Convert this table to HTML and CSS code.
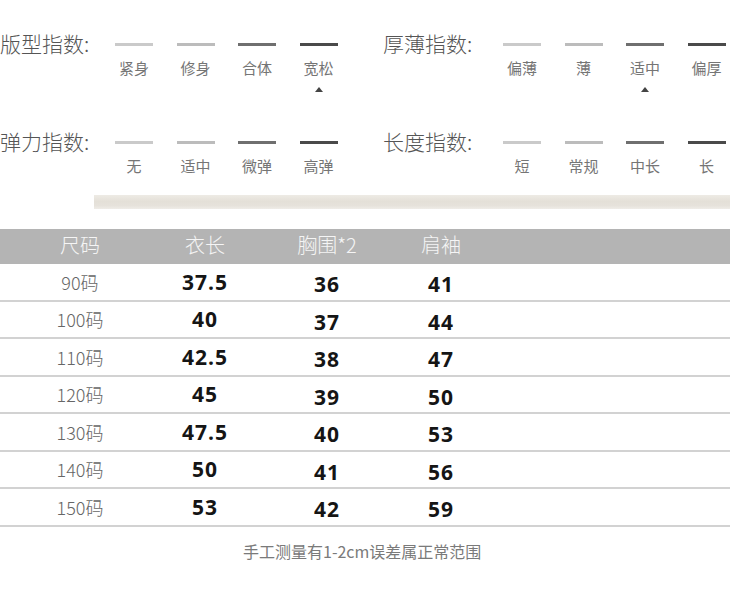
FILE: index.html
```html
<!DOCTYPE html>
<html lang="zh-CN">
<head>
<meta charset="utf-8">
<title>尺码表</title>
<link rel="stylesheet" href="styles.css">
</head>
<body>
<section class="indexes">
  <div class="index-row">
    <div class="index-group">
      <div class="index-label">版型指数:</div>
      <ul class="scale">
        <li class="step s1"><span class="bar"></span><span class="step-text">紧身</span></li>
        <li class="step s2"><span class="bar"></span><span class="step-text">修身</span></li>
        <li class="step s3"><span class="bar"></span><span class="step-text">合体</span></li>
        <li class="step s4 active"><span class="bar"></span><span class="step-text">宽松</span></li>
      </ul>
    </div>
    <div class="index-group wide">
      <div class="index-label">厚薄指数:</div>
      <ul class="scale">
        <li class="step s1"><span class="bar"></span><span class="step-text">偏薄</span></li>
        <li class="step s2"><span class="bar"></span><span class="step-text">薄</span></li>
        <li class="step s3 active"><span class="bar"></span><span class="step-text">适中</span></li>
        <li class="step s4"><span class="bar"></span><span class="step-text">偏厚</span></li>
      </ul>
    </div>
  </div>
  <div class="index-row">
    <div class="index-group">
      <div class="index-label">弹力指数:</div>
      <ul class="scale">
        <li class="step s1"><span class="bar"></span><span class="step-text">无</span></li>
        <li class="step s2"><span class="bar"></span><span class="step-text">适中</span></li>
        <li class="step s3"><span class="bar"></span><span class="step-text">微弹</span></li>
        <li class="step s4"><span class="bar"></span><span class="step-text">高弹</span></li>
      </ul>
    </div>
    <div class="index-group wide">
      <div class="index-label">长度指数:</div>
      <ul class="scale">
        <li class="step s1"><span class="bar"></span><span class="step-text">短</span></li>
        <li class="step s2"><span class="bar"></span><span class="step-text">常规</span></li>
        <li class="step s3"><span class="bar"></span><span class="step-text">中长</span></li>
        <li class="step s4"><span class="bar"></span><span class="step-text">长</span></li>
      </ul>
    </div>
  </div>
</section>

<div class="divider"></div>

<section class="size-table">
  <div class="tr thead">
    <div class="td">尺码</div>
    <div class="td">衣长</div>
    <div class="td">胸围*2</div>
    <div class="td">肩袖</div>
    <div class="td"></div>
  </div>
  <div class="tr"><div class="td size">90码</div><div class="td val">37.5</div><div class="td val low">36</div><div class="td val low">41</div><div class="td"></div></div>
  <div class="tr"><div class="td size">100码</div><div class="td val">40</div><div class="td val low">37</div><div class="td val low">44</div><div class="td"></div></div>
  <div class="tr"><div class="td size">110码</div><div class="td val">42.5</div><div class="td val low">38</div><div class="td val low">47</div><div class="td"></div></div>
  <div class="tr"><div class="td size">120码</div><div class="td val">45</div><div class="td val low">39</div><div class="td val low">50</div><div class="td"></div></div>
  <div class="tr"><div class="td size">130码</div><div class="td val">47.5</div><div class="td val low">40</div><div class="td val low">53</div><div class="td"></div></div>
  <div class="tr"><div class="td size">140码</div><div class="td val">50</div><div class="td val low">41</div><div class="td val low">56</div><div class="td"></div></div>
  <div class="tr"><div class="td size">150码</div><div class="td val">53</div><div class="td val low">42</div><div class="td val low">59</div><div class="td"></div></div>
</section>

<p class="note">手工测量有1-2cm误差属正常范围</p>
</body>
</html>
```

FILE: styles.css
```css
html, body {
  margin: 0;
  padding: 0;
}

body {
  width: 730px;
  height: 598px;
  overflow: hidden;
  background: #ffffff;
  font-family: "Noto Sans CJK SC", "Noto Sans", sans-serif;
}

.indexes {
  padding-top: 31px;
  display: flex;
  flex-direction: column;
  gap: 51px;
}

.index-row {
  display: grid;
  grid-template-columns: 383px 1fr;
}

.index-group {
  display: flex;
  align-items: flex-start;
}

.index-label {
  flex: none;
  width: 115px;
  font-size: 21px;
  line-height: 24px;
  font-weight: 300;
  color: #555555;
  white-space: nowrap;
}

.index-group.wide .index-label {
  width: 120px;
}

.scale {
  display: flex;
  gap: 23.5px;
  list-style: none;
  margin: 12px 0 0;
  padding: 0;
}

.step {
  position: relative;
  width: 38px;
  display: flex;
  flex-direction: column;
  align-items: center;
}

.bar {
  display: block;
  width: 38px;
  height: 3px;
}

.s1 .bar { background: #cacaca; }
.s2 .bar { background: #bcbcbc; }
.s3 .bar { background: #6f6f6f; }
.s4 .bar { background: #4a4a4a; }

.step-text {
  margin-top: 12px;
  font-size: 15px;
  line-height: 20px;
  color: #757575;
  white-space: nowrap;
}

.step.active::after {
  content: "";
  position: absolute;
  top: 44px;
  left: 50%;
  margin-left: -4px;
  border-left: 4px solid transparent;
  border-right: 4px solid transparent;
  border-bottom: 5px solid #444444;
}

.divider {
  margin: 19px 0 0 94px;
  height: 14px;
  background: linear-gradient(to bottom, #eeebe5 0%, #e4e0d8 45%, #e6e2db 75%, #efece7 100%);
}

.size-table {
  margin-top: 20px;
}

.tr {
  display: grid;
  grid-template-columns: 160px 90px 154px 74px 1fr;
  align-items: center;
  height: 37.5px;
  box-sizing: border-box;
  border-bottom: 2px solid #d2d2d2;
}

.td {
  text-align: center;
  white-space: nowrap;
}

.thead {
  height: 35px;
  border-bottom: none;
  background: #b4b4b4;
  color: #f5f5f5;
  font-size: 20px;
  line-height: 24px;
  font-weight: 300;
  padding-bottom: 4px;
}

.size {
  font-size: 18px;
  line-height: 24px;
  font-weight: 300;
  color: #666666;
}

.val {
  font-family: "Open Sans", "Noto Sans", sans-serif;
  font-size: 21px;
  line-height: 24px;
  font-weight: 700;
  letter-spacing: 1px;
  color: #151515;
}

.val.low {
  padding-top: 5px;
}

.note {
  margin: 13px 0 0;
  padding-left: 243px;
  font-size: 16px;
  line-height: 22px;
  color: #7a7a7a;
  white-space: nowrap;
}
```
